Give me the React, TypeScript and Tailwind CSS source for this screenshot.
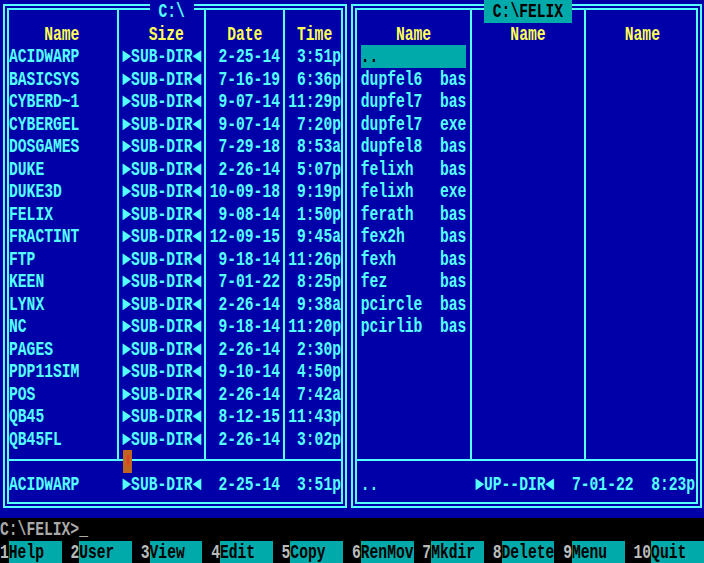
import { Fragment, ReactNode } from "react";

// Norton Commander style screen, 80x25 text cells of 8.8 x 22.52 px

const leftFiles = [
  ["ACIDWARP", "2-25-14", "3:51p"],
  ["BASICSYS", "7-16-19", "6:36p"],
  ["CYBERD~1", "9-07-14", "11:29p"],
  ["CYBERGEL", "9-07-14", "7:20p"],
  ["DOSGAMES", "7-29-18", "8:53a"],
  ["DUKE", "2-26-14", "5:07p"],
  ["DUKE3D", "10-09-18", "9:19p"],
  ["FELIX", "9-08-14", "1:50p"],
  ["FRACTINT", "12-09-15", "9:45a"],
  ["FTP", "9-18-14", "11:26p"],
  ["KEEN", "7-01-22", "8:25p"],
  ["LYNX", "2-26-14", "9:38a"],
  ["NC", "9-18-14", "11:20p"],
  ["PAGES", "2-26-14", "2:30p"],
  ["PDP11SIM", "9-10-14", "4:50p"],
  ["POS", "2-26-14", "7:42a"],
  ["QB45", "8-12-15", "11:43p"],
  ["QB45FL", "2-26-14", "3:02p"],
];

const rightFiles = [
  ["..", ""],
  ["dupfel6", "bas"],
  ["dupfel7", "bas"],
  ["dupfel7", "exe"],
  ["dupfel8", "bas"],
  ["felixh", "bas"],
  ["felixh", "exe"],
  ["ferath", "bas"],
  ["fex2h", "bas"],
  ["fexh", "bas"],
  ["fez", "bas"],
  ["pcircle", "bas"],
  ["pcirlib", "bas"],
];

const keys = ["Help", "User", "View", "Edit", "Copy", "RenMov", "Mkdir", "Delete", "Menu", "Quit"];

const Line = ({ children, className = "" }: { children?: ReactNode; className?: string }) => (
  <div className={"h-[22.52px] leading-[22.52px] " + className}>
    <div className="whitespace-pre scale-y-[1.35] translate-y-[1px]">{children}</div>
  </div>
);

const LeftPanel = () => (
  <div className="relative ml-[3px] w-[344px] h-[504px] border-[6px] border-double border-[#55ffff] flex flex-col text-[#55ffff]">
    <div className="absolute left-[140.6px] -top-[10px] bg-[#0000a8]">
      <Line>{" C:\\ "}</Line>
    </div>

    <div className="flex border-b-2 border-[#55ffff]">
      <div className="w-[111px] border-r-2 border-[#55ffff] pt-[12.5px] pb-[8.6px]">
        <Line className="text-[#ffff55]">{"    Name"}</Line>
        {leftFiles.map((f) => (
          <Line key={f[0]}>{f[0]}</Line>
        ))}
      </div>
      <div className="w-[88px] border-r-2 border-[#55ffff] pt-[12.5px] pb-[8.6px] pl-[3.2px]">
        <Line className="text-[#ffff55]">{"   Size"}</Line>
        {leftFiles.map((f) => (
          <Line key={f[0]}>{"\u25BASUB-DIR\u25C4"}</Line>
        ))}
      </div>
      <div className="w-[79px] border-r-2 border-[#55ffff] pt-[12.5px] pb-[8.6px] pl-[3.2px]">
        <Line className="text-[#ffff55]">{"  Date"}</Line>
        {leftFiles.map((f) => (
          <Line key={f[0]}>{f[1].padStart(8)}</Line>
        ))}
      </div>
      <div className="flex-1 pt-[12.5px] pb-[8.6px] pl-[3.4px]">
        <Line className="text-[#ffff55]">{" Time"}</Line>
        {leftFiles.map((f) => (
          <Line key={f[0]}>{f[2].padStart(6)}</Line>
        ))}
      </div>
    </div>

    <div className="flex pt-[12px]">
      <Line className="w-[111px]">ACIDWARP</Line>
      <Line className="w-[88px] pl-[3.2px]">{"\u25BASUB-DIR\u25C4"}</Line>
      <Line className="w-[79px] pl-[3.2px]">{" 2-25-14"}</Line>
      <Line className="flex-1 pl-[3.4px]">{" 3:51p"}</Line>
    </div>

    {/* mouse cursor */}
    <div className="absolute left-[114.2px] top-[440.4px] w-[8.8px] h-[22.5px] bg-[#c0641e] flex justify-center">
      <div className="mt-[5px] w-[2px] h-[10px] bg-[#e8382a]" />
    </div>
  </div>
);

const RightPanel = () => (
  <div className="relative ml-[4px] w-[351px] h-[504px] border-[6px] border-double border-[#55ffff] flex flex-col text-[#55ffff]">
    <div className="absolute left-[127px] -top-[10px] bg-[#00aaaa] text-black">
      <Line>{" C:\\FELIX "}</Line>
    </div>

    <div className="flex border-b-2 border-[#55ffff]">
      <div className="w-[115px] h-[449px] border-r-2 border-[#55ffff] pt-[12.5px] pl-[3.8px]">
        <Line className="text-[#ffff55]">{"    Name"}</Line>
        {rightFiles.map((f, i) => (
          <Line key={f[0] + f[1]} className={i === 0 ? "w-[105.6px] bg-[#00aaaa] text-black" : ""}>
            {f[1] ? f[0].padEnd(9) + f[1] : f[0]}
          </Line>
        ))}
      </div>
      <div className="w-[114px] border-r-2 border-[#55ffff] pt-[12.5px] pl-[3.2px]">
        <Line className="text-[#ffff55]">{"    Name"}</Line>
      </div>
      <div className="flex-1 pt-[12.5px] pl-[3.6px]">
        <Line className="text-[#ffff55]">{"    Name"}</Line>
      </div>
    </div>

    <div className="flex pt-[12px]">
      <Line className="w-[118.2px] pl-[3.8px]">..</Line>
      <Line className="w-[88px]">{"\u25BAUP--DIR\u25C4"}</Line>
      <Line className="w-[79.2px]">{" 7-01-22"}</Line>
      <Line className="flex-1">{" 8:23p"}</Line>
    </div>
  </div>
);

export default function App() {
  return (
    <div className="w-[704px] h-[563px] overflow-hidden bg-black font-['Liberation_Mono',monospace] text-[14.66px] font-bold">
      <div className="h-[518px] bg-[#0000a8] flex pt-[4px]">
        <LeftPanel />
        <RightPanel />
      </div>

      <Line className="text-[#aaaaaa]">{"C:\\FELIX>_"}</Line>

      <div className="flex">
        {keys.map((k, i) => (
          <Fragment key={k}>
            <Line className={(i === 9 ? "w-[17.6px]" : "w-[8.8px]") + " text-[#bbbbbb]"}>{String(i + 1)}</Line>
            <Line className="w-[52.8px] bg-[#00aaaa] text-black">{k}</Line>
            {i < 9 && <div className="w-[8.8px]" />}
          </Fragment>
        ))}
      </div>
    </div>
  );
}
